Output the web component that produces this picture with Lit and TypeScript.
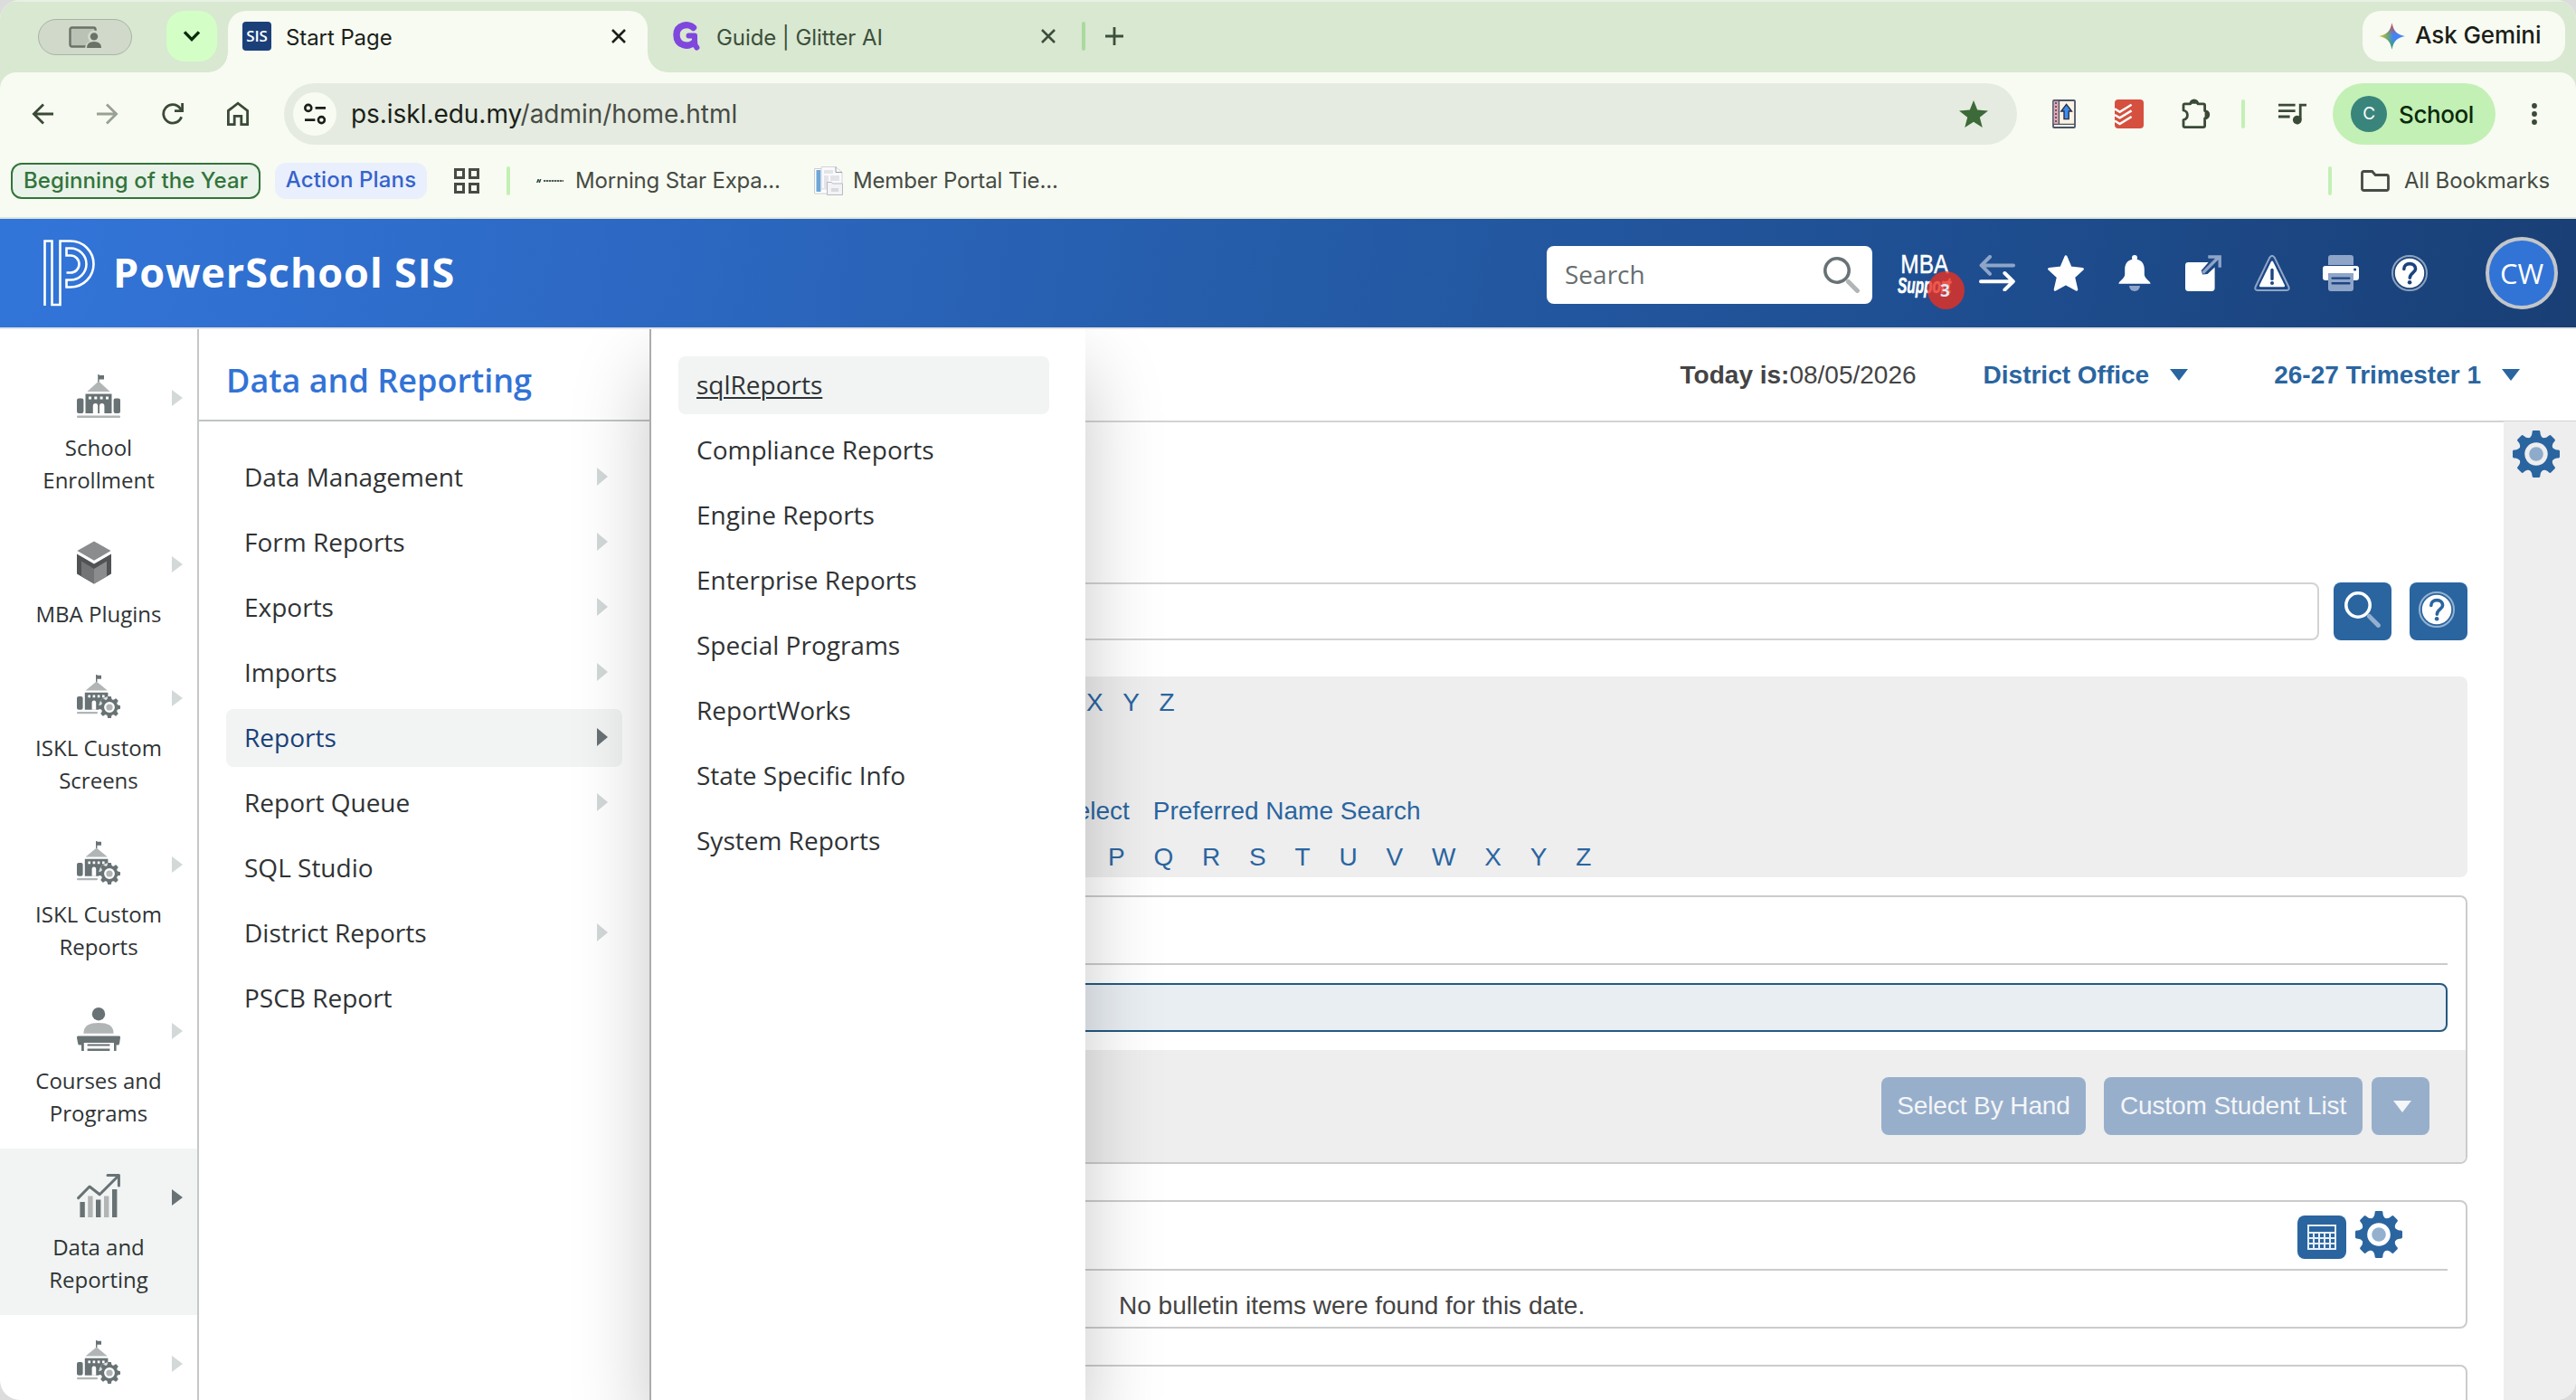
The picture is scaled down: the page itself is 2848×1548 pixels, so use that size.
import { LitElement, html, svg, css, nothing, type TemplateResult } from "lit";
import { customElement, state } from "lit/decorators.js";
import { classMap } from "lit/directives/class-map.js";

type Icon = TemplateResult;

const glyph = (w: number, h: number, body: unknown): Icon =>
  html`<svg width=${w} height=${h} viewBox="0 0 ${w} ${h}" fill="none">${body}</svg>`;

const TOOTH_ANGLES = [0, 45, 90, 135, 180, 225, 270, 315];

/* Toothed wheel centred on the origin of a 52 unit box. */
const gearShape = (color: string, hub: string) => svg`
  <circle r="16" stroke=${color} stroke-width="6.4" fill="none"/>
  ${TOOTH_ANGLES.map(
    (a) => svg`<path transform="rotate(${a})" d="M-9 -16.5C-6 -19 -4.6 -20 -4.4 -24.6Q-4.3 -26 -3 -26H3Q4.3 -26 4.4 -24.6C4.6 -20 6 -19 9 -16.5Z" fill=${color}/>`
  )}
  <circle r="7.8" fill=${hub}/>`;

const gear = (hub: string): Icon =>
  glyph(52, 52, svg`<g transform="translate(26 26)">${gearShape("#2a65a0", hub)}</g>`);

const DARK = "#687274";
const PALE = "#b1b5b5";

const schoolIcon = glyph(48, 48, svg`
  <path d="M23.2 0h1.4v1H30v4.4h-5.4V9h-1.4z" fill=${DARK}/>
  <path d="M24 7.5 36.6 19H11.4z" fill=${PALE}/>
  <path d="M9.5 21.5h29V43h-29z" fill=${DARK}/>
  <path d="M13 24.5h3v3h-3zM19.3 24.5h3v3h-3zM25.6 24.5h3v3h-3zM32 24.5h3v3h-3z" fill="#fff"/>
  <path d="M17.8 43V35q0-3 2.7-3t2.7 3v8zM25 43V35q0-3 2.7-3t2.7 3v8z" fill="#fff"/>
  <rect x="0" y="26.5" width="7.4" height="16.5" rx="2" fill=${DARK}/>
  <rect x="40.6" y="26.5" width="7.4" height="16.5" rx="2" fill=${DARK}/>
  <rect x="0" y="45.6" width="48" height="2.4" rx="1" fill=${PALE}/>`);

const schoolGearIcon = glyph(48, 48, svg`
  <path d="M21 0h1.4v.8H27v4h-4.6V8H21z" fill=${DARK}/>
  <path d="M21.7 7.4 33.8 17.6H9.6z" fill=${PALE}/>
  <path d="M8.8 19.8h25.6v5.4l-6 4-4 7 .6 2.6H8.8z" fill=${DARK}/>
  <path d="M12.4 22.6h2.6v2.6h-2.6zM17.6 22.6h2.6v2.6h-2.6zM22.8 22.6h2.6v2.6h-2.6zM28 22.6h2.6v2.6H28z" fill="#fff"/>
  <path d="M16.6 38.8V31q0-2.6 2.3-2.6t2.3 2.6v7.8z" fill="#fff"/>
  <rect x="0" y="24" width="6.6" height="14.8" rx="2" fill=${DARK}/>
  <rect x="0" y="41" width="23" height="2.2" rx="1" fill=${PALE}/>
  <circle cx="36" cy="36" r="12" fill="#fff" fill-opacity=".75"/>
  <g transform="translate(36 36) scale(.462)">${gearShape(DARK, PALE)}</g>`);

const cubeIcon = glyph(38, 48, svg`
  <path d="M19 .6 37.6 11 19 21.8.4 11z" fill="#8b8c8e"/>
  <path d="M0 14.6 19 25.6 38 14.6V36.4L19 47.4 0 36.4z" fill="#515254"/>
  <path d="M5 22.6 19 31v16.4L5 39.2z" fill="#737476"/>
  <path d="M33 22.6 19 31v16.4l14-8.2z" fill="#8b8c8e"/>`);

const lecternIcon = glyph(48, 48, svg`
  <circle cx="24" cy="7.2" r="7.2" fill=${DARK}/>
  <path d="M7.4 28.8C7.4 20 13.6 17 24 17s16.6 3 16.6 11.8z" fill=${PALE}/>
  <path d="M1.6 31.4h44.8q1.9 0 1.6 2l-1 6.6q-.2 1.6-1.8 1.6h-1.6V48h-2.6v-9H7.8v9H5v-6.4H3q-1.6 0-1.8-1.6L0 33.4q-.2-2 1.6-2z" fill=${DARK}/>
  <path d="M11.6 40.6h24.8v2H11.6zM11.6 45.6h24.8V48H11.6z" fill=${DARK}/>`);

const chartIcon = glyph(48, 48, svg`
  <path d="M1.6 26.6 14 14l11.2 8.8L46 2" stroke=${DARK} stroke-width="3" stroke-linecap="round" stroke-linejoin="round"/>
  <path d="M34 1.6h12.4V13" stroke=${DARK} stroke-width="3" stroke-linecap="round" stroke-linejoin="round"/>
  <path d="M3.4 31h5.4v17H3.4zM21 28.4h5.4V48H21zM39 17h5.4v31H39z" fill=${DARK}/>
  <path d="M12.2 24.4h5.4V48h-5.4zM30 24.4h5.4V48H30z" fill=${PALE}/>`);

const rightCaret = (h = 20): Icon =>
  html`<svg width="12" height=${h} viewBox="0 0 12 20" preserveAspectRatio="none"><path d="M0 0 12 10 0 20z" fill="currentColor"/></svg>`;

const downCaret = glyph(20, 13, svg`<path d="M0 0h20L10 13z" fill="currentColor"/>`);

const closeIcon = glyph(18, 18, svg`<path d="M2 2 16 16M16 2 2 16" stroke="currentColor" stroke-width="2.6"/>`);

const magnifier = (ring: string, handle: string): Icon => glyph(40, 40, svg`
  <path d="M27.5 27.5 37.4 37.4" stroke=${handle} stroke-width="5" stroke-linecap="round"/>
  <circle cx="15" cy="15" r="13.2" stroke=${ring} stroke-width="3.6"/>`);

const helpIcon = (bg: string): Icon => glyph(40, 40, svg`
  <circle cx="20" cy="20" r="19" stroke="#fff" stroke-opacity=".5" stroke-width="2"/>
  <circle cx="20" cy="20" r="16.2" fill="#fff"/>
  <path d="M13.8 15.4C13.8 11.6 16.6 9.6 20.2 9.6S26.6 11.8 26.6 15.2C26.6 19.6 20.3 19.8 20.3 25.2" stroke=${bg} stroke-width="3.6" stroke-linecap="round"/>
  <circle cx="20.1" cy="30.2" r="2.3" fill=${bg}/>`);

interface RailItem { icon: Icon; lines: string[]; active?: boolean; }

const RAIL: RailItem[] = [
  { icon: schoolIcon, lines: ["School", "Enrollment"] },
  { icon: cubeIcon, lines: ["MBA Plugins"] },
  { icon: schoolGearIcon, lines: ["ISKL Custom", "Screens"] },
  { icon: schoolGearIcon, lines: ["ISKL Custom", "Reports"] },
  { icon: lecternIcon, lines: ["Courses and", "Programs"] },
  { icon: chartIcon, lines: ["Data and", "Reporting"], active: true },
  { icon: schoolGearIcon, lines: [] },
];

const SECTIONS: { label: string; nested: boolean }[] = [
  { label: "Data Management", nested: true },
  { label: "Form Reports", nested: true },
  { label: "Exports", nested: true },
  { label: "Imports", nested: true },
  { label: "Reports", nested: true },
  { label: "Report Queue", nested: true },
  { label: "SQL Studio", nested: false },
  { label: "District Reports", nested: true },
  { label: "PSCB Report", nested: false },
];

const REPORTS = [
  "sqlReports", "Compliance Reports", "Engine Reports", "Enterprise Reports",
  "Special Programs", "ReportWorks", "State Specific Info", "System Reports",
];

@customElement("browser-chrome")
export class BrowserChrome extends LitElement {
  static styles = css`
    :host { display: block; height: 242px; flex: none; font-family: Inter, "Liberation Sans", sans-serif; color: #1b1f19; background: #d9e8d1; }
    svg { display: block; flex: none; }
    .strip { height: 80px; display: flex; align-items: flex-start; padding: 12px 12px 0 42px; box-sizing: border-box; box-shadow: inset 0 2px 0 #e9f1e4; }
    .share { width: 102px; height: 38px; margin-top: 9px; border: 1px solid #a9b3a4; border-radius: 20px; background: #d1d9cb; display: flex; align-items: center; justify-content: center; }
    .tabsearch { width: 56px; height: 56px; margin-left: 38px; border-radius: 20px; background: #d3ffc6; display: flex; align-items: center; justify-content: center; }
    .tab { height: 68px; box-sizing: border-box; display: flex; align-items: flex-start; font-size: 24px; letter-spacing: -0.08px; line-height: 59px; white-space: nowrap; }
    .tab .fav { margin-top: 12px; }
    .tab .x { margin: 19px 0 0 auto; }
    .active { position: relative; width: 464px; margin-left: 12px; padding: 0 23px 0 16px; border-radius: 20px 20px 0 0; background: #f8fbf2; }
    .active::before, .active::after { content: ""; position: absolute; bottom: 0; width: 22px; height: 22px; }
    .active::before { left: -22px; background: radial-gradient(circle at 0 0, transparent 21.5px, #f8fbf2 22px); }
    .active::after { right: -22px; background: radial-gradient(circle at 100% 0, transparent 21.5px, #f8fbf2 22px); }
    .other { width: 424px; margin-left: 28px; color: #3c4f3b; }
    .sis { width: 32px; height: 32px; border-radius: 4px; background: #1b4079; color: #fff; font: 600 17px/32px "Open Sans", sans-serif; text-align: center; }
    .title { margin-left: 16px; }
    .bar { width: 4px; height: 32px; border-radius: 2px; background: #c3f0b5; flex: none; }
    .strip .bar { background: #a9da9d; margin: 12px 22px 0 28px; }
    .plus { margin-top: 18px; }
    .gemini { margin-left: auto; width: 224px; height: 56px; border-radius: 20px; background: #f8fbf2; box-sizing: border-box; padding-left: 18px; display: flex; align-items: center; font-size: 26px; font-weight: 500; letter-spacing: -0.1px; gap: 11px; white-space: nowrap; line-height: 51px; }
    .gemini span { height: 54px; }
    .panel { background: #f8fbf2; border-radius: 18px 18px 0 0; height: 160px; border-bottom: 2px solid #dfe6da; }
    .tools { display: flex; align-items: center; padding: 12px 0 0 35px; height: 68px; color: #3a4a37; }
    .omni { width: 1916px; height: 68px; border-radius: 34px; background: #e5ebe0; margin-left: 38px; box-sizing: border-box; padding: 0 32px 0 10px; display: flex; align-items: center; }
    .site { width: 48px; height: 48px; border-radius: 24px; background: #f8fbf2; display: flex; align-items: center; justify-content: center; color: #1b1f19; }
    .url { margin-left: 16px; font-size: 28px; letter-spacing: -0.04px; color: #474b45; flex: 1; white-space: nowrap; }
    .url b { font-weight: 400; color: #1b1f19; }
    .profile { width: 180px; height: 68px; margin-left: 28px; border-radius: 34px; background: #c3f0b5; display: flex; align-items: center; gap: 13px; padding-left: 20px; box-sizing: border-box; font-size: 26px; font-weight: 500; letter-spacing: -0.4px; color: #0b2a0b; }
    .mono { width: 40px; height: 40px; border-radius: 20px; background: #3a857b; color: #fff; font-size: 19px; font-weight: 400; line-height: 40px; text-align: center; }
    .marks { display: flex; align-items: center; height: 80px; padding: 0 30px 0 12px; font-size: 24px; letter-spacing: -0.18px; color: #464b44; white-space: nowrap; }
    .marks > span, .all span { margin-top: -1px; }
    .chip { box-sizing: border-box; height: 40px; border-radius: 12px; line-height: 38px; text-align: center; font-weight: 500; }
    .year { width: 276px; border: 2px solid #33743b; background: #e9f3e9; color: #33743b; line-height: 35px; letter-spacing: 0.08px; }
    .plans { width: 168px; margin-left: 16px; background: #e9effd; color: #3563cb; letter-spacing: 0.15px; }
    .all { margin-left: auto; display: flex; align-items: center; letter-spacing: -0.1px; }
  `;

  render() {
    return html`
      <div class="strip">
        <div class="share">${glyph(38, 26, svg`
          <rect x="2.5" y="2.5" width="28" height="21" rx="2" fill="#b9c2b4" stroke="#6a7167" stroke-width="2.4"/>
          <circle cx="29" cy="12.6" r="7" fill="#d1d9cb"/><path d="M19 26q0-9 10-9t9 9z" fill="#d1d9cb"/>
          <circle cx="29" cy="12.4" r="4.2" fill="#6a7167"/><path d="M21 25q0-7 8-7t8 7z" fill="#6a7167"/>`)}</div>
        <div class="tabsearch">${glyph(20, 14, svg`<path d="M2 2.4 10 10.6 18 2.4" stroke="#0b2a0b" stroke-width="3.4"/>`)}</div>
        <div class="tab active">
          <div class="fav sis">SIS</div><span class="title">Start Page</span><span class="x">${closeIcon}</span>
        </div>
        <div class="tab other">
          <div class="fav">${glyph(32, 32, svg`
            <path d="M22.5 6.5C17.5 1.5 4 3 4 14.6 4 27 17 28.6 23.4 23" stroke="#7f47dd" stroke-width="7.4" stroke-linecap="round"/>
            <path d="M17.5 15.4H24V25l2.4 3.6" stroke="#7f47dd" stroke-width="6" stroke-linecap="round" stroke-linejoin="round"/>`)}</div>
          <span class="title">Guide | Glitter AI</span><span class="x">${closeIcon}</span>
        </div>
        <div class="bar"></div>
        <div class="plus">${glyph(20, 20, svg`<path d="M10 0V20M0 10H20" stroke="#3c4f3b" stroke-width="2.8"/>`)}</div>
        <div class="gemini">
          <svg width="29" height="30" viewBox="0 0 30 30">
            <defs>
              <linearGradient id="g1" x1="0" y1="0" x2="1" y2="0"><stop offset="0" stop-color="#f4c22b"/><stop offset=".35" stop-color="#6aa777"/><stop offset=".55" stop-color="#4285f4"/><stop offset="1" stop-color="#4a82f5"/></linearGradient>
              <linearGradient id="g2" x1="0" y1="0" x2="0" y2="1"><stop offset="0" stop-color="#ea4335"/><stop offset=".45" stop-color="#ea4335" stop-opacity="0"/><stop offset=".6" stop-color="#34a853" stop-opacity="0"/><stop offset="1" stop-color="#34a853"/></linearGradient>
            </defs>
            <path d="M15 0C16.6 9 21 13.4 30 15 21 16.6 16.6 21 15 30 13.4 21 9 16.6 0 15 9 13.4 13.4 9 15 0z" fill="url(#g1)"/>
            <path d="M15 0C16.6 9 21 13.4 30 15 21 16.6 16.6 21 15 30 13.4 21 9 16.6 0 15 9 13.4 13.4 9 15 0z" fill="url(#g2)"/>
          </svg><span>Ask Gemini</span>
        </div>
      </div>
      <div class="panel">
        <div class="tools">
          ${glyph(24, 24, svg`<path d="M24 12H3M13 1.6 2.4 12 13 22.4" stroke="currentColor" stroke-width="2.8"/>`)}
          <svg style="margin-left:48px" width="24" height="24" viewBox="0 0 24 24" fill="none" opacity=".5"><path d="M0 12H21M11 1.6 21.6 12 11 22.4" stroke="currentColor" stroke-width="2.8"/></svg>
          <svg style="margin-left:48px" width="24" height="24" viewBox="0 0 24 24" fill="none"><path d="M21.6 15.2A10.2 10.2 0 1 1 20 5.6L22 8" stroke="currentColor" stroke-width="2.8"/><path d="M24 0V10H14V7.2H21.2V0z" fill="currentColor"/></svg>
          <svg style="margin-left:47px" width="26" height="28" viewBox="0 0 26 28" fill="none"><path d="M2.4 10.4 13 2.2 23.6 10.4V25.6H16.8V16.4H9.2V25.6H2.4z" stroke="currentColor" stroke-width="2.8"/></svg>
          <div class="omni">
            <div class="site">${glyph(24, 24, svg`
              <circle cx="4.8" cy="5.4" r="3.5" stroke="currentColor" stroke-width="2.6"/><path d="M12.6 5.4H24M1 18.6H12.4" stroke="currentColor" stroke-width="2.8"/>
              <circle cx="19.4" cy="18.6" r="3.5" stroke="currentColor" stroke-width="2.6"/>`)}</div>
            <span class="url"><b>ps.iskl.edu.my</b>/admin/home.html</span>
            ${glyph(32, 30, svg`<path d="M16 0 20.2 10.6 32 11.4 22.8 18.8 25.8 30 16 23.8 6.2 30 9.2 18.8 0 11.4 11.8 10.6z" fill="#3c6a38"/>`)}
          </div>
          <svg style="margin-left:38px" width="28" height="32" viewBox="0 0 28 32" fill="none">
            <rect x="2" y="1" width="24" height="30" rx="1" fill="#fbf3e2" stroke="#4b5568" stroke-width="1.8"/>
            <rect x="2.6" y="1.8" width="5.4" height="25" fill="#e8a6b4"/><path d="M5 3v24" stroke="#4b5568" stroke-width="1.8" stroke-dasharray="2 2"/>
            <path d="M8.4 1v26M2 27.4h24" stroke="#4b5568" stroke-width="1.4"/>
            <path d="M16.6 5.4 22.4 13h-3.2v8.6H14V13h-3.2z" fill="#3f8df0" stroke="#25304a" stroke-width="1.4"/>
          </svg>
          <svg style="margin-left:42px" width="32" height="32" viewBox="0 0 32 32" fill="none">
            <rect width="32" height="32" rx="4" fill="#d5503f"/>
            <path d="M0 10.4 5.6 13.8 18.6 5.8M0 17 5.6 20.4 18.6 12.4M0 23.6 5.6 27 18.6 19" stroke="#fff" stroke-width="2.5"/>
          </svg>
          <svg style="margin-left:41px" width="34" height="34" viewBox="0 0 34 34" fill="none">
            <path d="M3 7.4q0-1.6 1.6-1.6H10.8A4 4 0 0 1 18.8 5.8H25q1.6 0 1.6 1.6V13.6A4.2 4.2 0 0 1 26.6 22V30q0 1.6-1.6 1.6H4.6Q3 31.6 3 30V23.6Q7.4 22.4 7.4 18.2T3 13z" stroke="currentColor" stroke-width="2.8" stroke-linejoin="round"/>
            <path d="M10.8 5.8a4 4 0 0 1 8 0zM26.6 13.6a4.2 4.2 0 0 1 0 8.4z" fill="currentColor"/>
          </svg>
          <div class="bar" style="margin-left:33px"></div>
          <svg style="margin-left:37px" width="32" height="24" viewBox="0 0 32 24" fill="none">
            <path d="M0 2.2H18.6M0 8.6H18.6M0 15H12.6" stroke="currentColor" stroke-width="2.8"/>
            <path d="M24.2 18V2.2H31" stroke="currentColor" stroke-width="2.8"/><circle cx="20.8" cy="18.6" r="4.9" fill="currentColor"/>
          </svg>
          <div class="profile"><div class="mono">C</div>School</div>
          <svg style="margin-left:40px" width="6" height="26" viewBox="0 0 6 26"><circle cx="3" cy="4" r="2.9" fill="currentColor"/><circle cx="3" cy="13" r="2.9" fill="currentColor"/><circle cx="3" cy="22" r="2.9" fill="currentColor"/></svg>
        </div>
        <div class="marks">
          <div class="chip year">Beginning of the Year</div>
          <div class="chip plans">Action Plans</div>
          <svg style="margin-left:30px" width="28" height="28" viewBox="0 0 28 28" fill="none"><path d="M1.5 1.5h9v9h-9zM17.5 1.5h9v9h-9zM1.5 17.5h9v9h-9zM17.5 17.5h9v9h-9z" stroke="currentColor" stroke-width="3"/></svg>
          <div class="bar" style="margin-left:30px"></div>
          <svg style="margin-left:29px" width="30" height="6" viewBox="0 0 30 6"><path d="M1.5 1 0 5h1.4l.6-1.600h1L2.400 5H4L5.500 1H4l-.5 1.400h-1L3 1z" fill="#23413a"/><path d="M8 3H30" stroke="#4c5d55" stroke-width="2" stroke-dasharray="2.4 .6"/></svg>
          <span style="margin-left:13px;width:226px">Morning Star Expa...</span>
          <svg style="margin-left:38px" width="32" height="32" viewBox="0 0 32 32" fill="none">
            <path d="M.5 2.5H22V30H.5z" fill="#fff" stroke="#c9ccd4"/><rect x="2.5" y="4" width="5" height="24" fill="#6ea6d8"/>
            <path d="M8 .5H24L31 6.5V25H8z" fill="#fafafc" stroke="#d3d4da"/><path d="M24 .5V6.5H31" stroke="#9a9ca4"/>
            <path d="M11 4h10v4H11zM11 10h5v14h-5zM18 10h10v6H18z" fill="#e3e4ea"/>
            <path d="M14.5 17.5h5l1 1.5h11V31.5h-17z" fill="#f3f3f6" stroke="#b9bbc2"/><path d="M19 24h8v4h-8z" fill="#d9dae0"/>
          </svg>
          <span style="margin-left:11px">Member Portal Tie...</span>
          <div class="all">
            <div class="bar"></div>
            <svg style="margin-left:32px" width="32" height="24" viewBox="0 0 32 24" fill="none"><path d="M1.5 3.5q0-2 2-2H12.6L16.2 5.5H28.5q2 0 2 2V20.5q0 2-2 2H3.5q-2 0-2-2z" stroke="currentColor" stroke-width="2.8"/></svg>
            <span style="margin-left:16px;width:160px">All Bookmarks</span>
          </div>
        </div>
      </div>`;
  }
}

@customElement("app-root")
export class AppRoot extends LitElement {
  @state() private section = "Reports";
  @state() private report = "sqlReports";

  static styles = css`
    :host { display: block; width: 2848px; height: 1548px; overflow: hidden; background: #dcdcdc; font-family: "Open Sans", "Noto Sans", sans-serif; color: #2f3335; }
    svg { display: block; flex: none; }
    .window { height: 1548px; border-radius: 22px; overflow: hidden; background: #fff; display: flex; flex-direction: column; }
    .masthead { height: 120px; flex: none; display: flex; align-items: center; padding: 0 20px 0 48px; border-bottom: 2px solid #e4e4e6; background: linear-gradient(100deg, #3275d9 0%, #2d69c4 24%, #255ca8 50%, #1f5094 73%, #193f75 100%); color: #fff; }
    .brand { margin: -3px 0 0 20px; font-size: 45px; font-weight: 700; letter-spacing: 0.9px; white-space: nowrap; }
    .find { margin-left: auto; width: 360px; height: 64px; box-sizing: border-box; border-radius: 8px; background: #fff; padding: 0 14px 0 20px; display: flex; align-items: center; justify-content: space-between; font-size: 28px; color: #676e70; margin-top: 4px; }
    .find span { margin-top: -3px; }
    .mba { position: relative; width: 74px; height: 60px; margin-left: 28px; font-family: "Liberation Sans", sans-serif; }
    .mba .top { display: block; font-size: 29px; line-height: 28px; padding: 6px 0 0 4px; transform: scaleX(.84); transform-origin: 0 0; -webkit-text-stroke: .5px #fff; }
    .mba .sub { display: block; font-size: 24px; line-height: 24px; margin-top: -2px; font-weight: 700; font-style: italic; transform: scaleX(.64); transform-origin: 0 0; -webkit-text-stroke: .6px #fff; }
    .count { position: absolute; left: 33px; top: 28px; width: 41px; height: 42px; border-radius: 50%; background: rgba(234, 47, 33, .8); font: 700 19px/42px "Open Sans", sans-serif; color: #dfe5f0; text-align: center; text-indent: -2px; }
    .actions { display: flex; gap: 36px; margin-left: 16px; }
    .me { margin-left: 64px; width: 72px; height: 72px; border: 4px solid #c3c6c9; border-radius: 50%; background: #3273d6; font-size: 31px; line-height: 72px; text-align: center; font-weight: 500; }
    .body { flex: 1; display: grid; grid-template-columns: 220px 500px 1fr; position: relative; overflow: hidden; min-height: 0; }
    .rail { border-right: 2px solid #c4c8c8; padding-top: 22px; overflow: hidden; min-height: 0; }
    .entry { padding: 28px 0 21px; }
    .entry.on { background: #f1f4f3; }
    .marker { display: grid; grid-template-columns: 48px 12px; column-gap: 57px; padding-left: 85px; height: 48px; align-items: center; color: #d3d8d8; }
    .marker svg:last-child { margin-top: 4px; }
    .on .marker { color: #687274; }
    .caption { margin-top: 15px; font-size: 24px; line-height: 36px; text-align: center; white-space: nowrap; }
    .caption span { display: block; }
    .sections { min-width: 0; }
    .heading { height: 100px; border-bottom: 2px solid #bfc4c4; padding-left: 30px; font-size: 36px; font-weight: 600; line-height: 113px; color: #3273d6; white-space: nowrap; }
    .list { display: flex; flex-direction: column; gap: 8px; padding: 30px 32px 0 30px; }
    .row { height: 64px; border-radius: 8px; padding: 0 16px 3px 20px; box-sizing: border-box; display: flex; align-items: center; justify-content: space-between; font-size: 28px; color: #2f3335; white-space: nowrap; }
    .row svg { color: #d3d8d8; }
    .row.on { background: #f1f4f3; color: #19407a; }
    .row.on svg { color: #687274; }
    .flyout { position: absolute; left: 718px; top: 0; bottom: 0; width: 450px; border-left: 2px solid #a9adad; background: #fff; padding: 30px 0 0 30px; box-shadow: 0 44px 80px rgba(0, 0, 0, .22); box-sizing: content-box; }
    .flyout .row { width: 410px; margin-bottom: 8px; }
    .flyout .on { color: #2f3335; text-decoration: underline; text-decoration-thickness: 2px; text-underline-offset: 3px; }
    .main { font-family: "Liberation Sans", Arial, sans-serif; font-size: 28px; color: #444; min-width: 0; }
    .context { height: 101px; border-bottom: 2px solid #d3d3d3; display: flex; align-items: center; justify-content: flex-end; padding-right: 62px; white-space: nowrap; }
    .pick { display: flex; align-items: center; font-weight: 700; color: #2a65a0; gap: 23px; }
    .columns { display: grid; grid-template-columns: 1fr 80px; height: 1081px; }
    .tray { background: #eee; margin-top: -1px; padding: 10px 0 0 10px; }
    .content { padding: 177px 40px 0; min-width: 0; overflow: hidden; }
    .search { display: flex; height: 64px; }
    .field { flex: 1; box-sizing: border-box; border: 2px solid #d3d3d3; border-radius: 8px; }
    .square { width: 64px; height: 64px; border-radius: 8px; background: #2a65a0; display: flex; justify-content: center; padding-top: 10px; box-sizing: border-box; }
    .browse { margin-top: 40px; height: 222px; box-sizing: border-box; border-radius: 8px; background: #eee; padding-top: 9px; line-height: 40px; color: #2a65a0; white-space: nowrap; }
    .links { display: flex; height: 40px; }
    .card { margin-top: 20px; border: 2px solid #ccc; border-radius: 8px; box-sizing: border-box; overflow: hidden; }
    .card + .card { margin-top: 40px; }
    .rule { height: 2px; background: #ccc; margin: 0 20px; }
    .selection { height: 50px; margin: 20px 20px; border: 2px solid #245a80; border-radius: 8px; background: #e9eef3; }
    .foot { height: 124px; background: #eee; display: flex; justify-content: flex-end; padding: 30px 40px 0 0; box-sizing: border-box; }
    .btn { height: 64px; border-radius: 8px; background: #98afcb; color: #f4f6f9; line-height: 64px; text-align: center; display: flex; align-items: center; justify-content: center; letter-spacing: -0.1px; }
    .btn svg { margin-left: 4px; }
    .bulletinhead { height: 74px; display: flex; justify-content: flex-end; padding: 0 70px 0 0; box-sizing: border-box; gap: 10px; }
    .cal { width: 54px; height: 48px; margin-top: 15px; border-radius: 8px; background: #2a65a0; display: flex; align-items: center; justify-content: center; }
    .empty { padding: 19px 0 0 475px; height: 62px; box-sizing: border-box; line-height: 40px; white-space: nowrap; }
  `;

  private masthead() {
    return html`
      <header class="masthead">
        <svg width="57" height="74" viewBox="0 0 57 74" fill="none"><path d="M1.5 73V1.5H9.5V72H18.5V1.5H30A25.5 25.5 0 0 1 30 52.5H25.5V44.5H30A17.5 17.5 0 0 0 30 9.5H25.5V17.5H30A9.5 9.5 0 0 1 30 36.5H25.5" stroke="#fff" stroke-width="2.6"/></svg>
        <div class="brand">PowerSchool SIS</div>
        <div class="find"><span>Search</span>${magnifier("#687274", "#b1b5b5")}</div>
        <div class="mba"><span class="top">MBA</span><span class="sub">Support</span><span class="count">3</span></div>
        <div class="actions">
          ${glyph(40, 40, svg`
            <path d="M38 11.4H3M12 2 2.6 11.4 12 20.8" stroke="#8ea5c8" stroke-width="4" stroke-linecap="round" stroke-linejoin="round"/>
            <path d="M2 29.2H37M28.4 20 37.8 29.2 28.4 38.4" stroke="#fff" stroke-width="4" stroke-linecap="round" stroke-linejoin="round"/>`)}
          ${glyph(40, 40, svg`<path d="M20 1.8 25.2 14 38.4 15.4 28.6 24.4 31.8 38.2 20 31.8 8.2 38.2 11.4 24.4 1.6 15.4 14.8 14z" fill="#fff" stroke="#fff" stroke-width="3" stroke-linejoin="round"/>`)}
          ${glyph(40, 40, svg`
            <circle cx="20" cy="3" r="3" fill="#fff"/><path d="M20 4.6C12.6 4.6 9.2 9.6 9.2 16v5.6C9.2 26 2.4 29 2.4 31.8H37.6C37.6 29 30.8 26 30.8 21.6V16C30.8 9.6 27.4 4.6 20 4.6z" fill="#fff"/>
            <path d="M14 34H26a6 6 0 0 1-12 0z" fill="#8ea5c8"/>`)}
          ${glyph(40, 40, svg`
            <path d="M3.4 8H25.6L17.6 17.2 19.2 21.6 24.6 21 32.6 13.4V36.6q0 3.4-3.4 3.4H3.4Q0 40 0 36.6V11.4Q0 8 3.4 8z" fill="#fff"/>
            <path d="M20.6 18.6 36 3.2M27 2H38.2V12" stroke="#8ea5c8" stroke-width="3.4" stroke-linecap="square"/>`)}
          ${glyph(40, 40, svg`
            <path d="M17.4 2.6Q20-.8 22.6 2.6L38.4 35.2Q39.6 39 36 39H4Q.4 39 1.6 35.2z" stroke="#8ea5c8" stroke-width="2"/>
            <path d="M18.8 7.4Q20 5.6 21.2 7.4L34 33.6Q34.4 35.2 33 35.2H7Q5.6 35.2 6 33.6z" fill="#fff"/>
            <path d="M20 16.4V26.4" stroke="#1c4583" stroke-width="3.4" stroke-linecap="round"/><circle cx="20" cy="31" r="2" fill="#1c4583"/>`)}
          ${glyph(40, 40, svg`
            <path d="M6 11V3Q6 0 9 0H31q3 0 3 3V11z" fill="#8ea5c8"/>
            <path d="M3 12H37q3 0 3 3V25q0 3-3 3H3Q0 28 0 25V15q0-3 3-3z" fill="#fff"/><circle cx="35.6" cy="16" r="1.6" fill="#1c4583"/>
            <path d="M6 20H34V37q0 3-3 3H9q-3 0-3-3z" fill="#8ea5c8"/><path d="M10.6 25.6H29.4M10.6 31.2H29.4" stroke="#1c4583" stroke-width="2.4" stroke-linecap="round"/>`)}
          ${helpIcon("#1c4380")}
        </div>
        <div class="me">CW</div>
      </header>`;
  }

  private menuRow(label: string, selected: boolean, nested: boolean, pick: () => void) {
    return html`<div class=${classMap({ row: true, on: selected })} @click=${pick}>
      <span>${label}</span>${nested ? rightCaret() : nothing}
    </div>`;
  }

  private mainArea() {
    const lower = "PQRSTUVWXYZ".split("");
    return html`
      <main class="main">
        <div class="context">
          <b>Today is:</b><span style="margin-right:74px">08/05/2026</span>
          <div class="pick" style="margin-right:95px">District Office ${downCaret}</div>
          <div class="pick">26-27 Trimester 1 ${downCaret}</div>
        </div>
        <div class="columns">
          <div class="content">
            <div class="search">
              <div class="field"></div>
              <div class="square" style="margin:0 20px 0 16px">${magnifier("#fff", "#94b0cf")}</div>
              <div class="square" style="padding-right:4px">${helpIcon("#2a65a0")}</div>
            </div>
            <div class="browse">
              <div class="links" style="gap:21.6px;padding-left:441px"><span>X</span><span>Y</span><span>Z</span></div>
              <div class="links" style="gap:26px;padding:80px 0 0 411px"><span>Select</span><span>Preferred Name Search</span></div>
              <div class="links" style="gap:31.8px;padding:11px 0 0 465px">${lower.map((l) => html`<span>${l}</span>`)}</div>
            </div>
            <div class="card">
              <div style="height:73px"></div>
              <div class="rule"></div>
              <div class="selection"></div>
              <div class="foot">
                <div class="btn" style="width:226px">Select By Hand</div>
                <div class="btn" style="width:286px;margin:0 10px 0 20px">Custom Student List</div>
                <div class="btn" style="width:64px">${downCaret}</div>
              </div>
            </div>
            <div class="card">
              <div class="bulletinhead">
                <div class="cal">${glyph(32, 28, svg`
                  <rect x="0" y="0" width="32" height="28" fill="#e6eef6"/><path d="M2 2H30V8H2z" fill="#2a65a0"/>
                  <path d="M2 12H30M2 18H30M2 24H30" stroke="#2a65a0" stroke-width="4" stroke-dasharray="4 2"/>`)}</div>
                <div style="margin-top:10px">${gear("#94b0cf")}</div>
              </div>
              <div class="rule"></div>
              <div class="empty">No bulletin items were found for this date.</div>
            </div>
            <div class="card" style="height:80px"></div>
          </div>
          <div class="tray">${gear("#8eabcc")}</div>
        </div>
      </main>`;
  }

  render() {
    return html`
      <div class="window">
        <browser-chrome></browser-chrome>
        ${this.masthead()}
        <div class="body">
          <nav class="rail">
            ${RAIL.map((item) => html`
              <div class=${classMap({ entry: true, on: !!item.active })}>
                <div class="marker">${item.icon}${rightCaret(18)}</div>
                <div class="caption">${item.lines.map((l) => html`<span>${l}</span>`)}</div>
              </div>`)}
          </nav>
          <section class="sections">
            <div class="heading">Data and Reporting</div>
            <div class="list">
              ${SECTIONS.map((s) => this.menuRow(s.label, s.label === this.section, s.nested, () => (this.section = s.label)))}
            </div>
          </section>
          ${this.mainArea()}
          <div class="flyout">
            ${REPORTS.map((r) => this.menuRow(r, r === this.report, false, () => (this.report = r)))}
          </div>
        </div>
      </div>`;
  }
}
